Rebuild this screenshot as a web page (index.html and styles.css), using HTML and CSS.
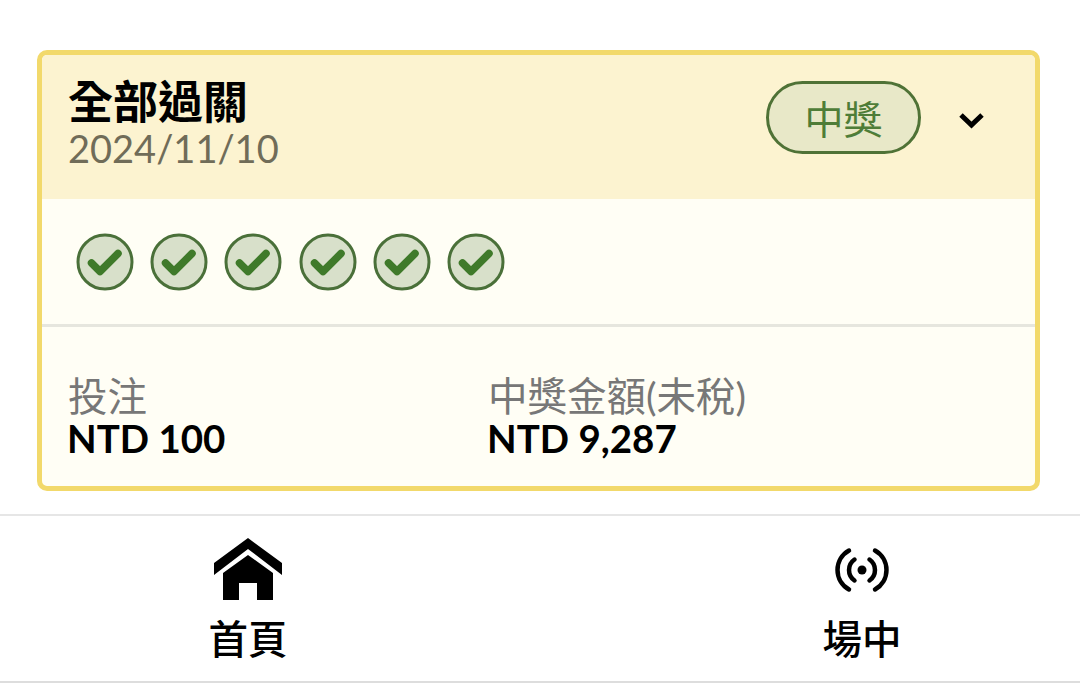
FILE: index.html
```html
<!DOCTYPE html>
<html lang="zh-Hant">
  <head>
    <meta charset="utf-8">
    <meta name="viewport" content="width=device-width,initial-scale=1.0">
    <title>全部過關</title>
    <link rel="stylesheet" href="styles.css">
  </head>
  <body>
    <main class="content">
      <section class="bet-card">
        <header class="bet-header">
          <div class="bet-title">
            <h1>全部過關</h1>
            <p>2024/11/10</p>
          </div>
          <span class="badge">中獎</span>
          <svg class="chevron" viewBox="0 0 28 18" width="28" height="18">
            <path d="M3 4L13.5 14L24 4" fill="none" stroke="#000" stroke-width="5"/>
          </svg>
        </header>
        <div class="legs">
          <svg class="leg" viewBox="0 0 58 58"><circle cx="29" cy="29" r="27" /><path d="M15.5 30L24 38.5L42 20.5" /></svg>
          <svg class="leg" viewBox="0 0 58 58"><circle cx="29" cy="29" r="27" /><path d="M15.5 30L24 38.5L42 20.5" /></svg>
          <svg class="leg" viewBox="0 0 58 58"><circle cx="29" cy="29" r="27" /><path d="M15.5 30L24 38.5L42 20.5" /></svg>
          <svg class="leg" viewBox="0 0 58 58"><circle cx="29" cy="29" r="27" /><path d="M15.5 30L24 38.5L42 20.5" /></svg>
          <svg class="leg" viewBox="0 0 58 58"><circle cx="29" cy="29" r="27" /><path d="M15.5 30L24 38.5L42 20.5" /></svg>
          <svg class="leg" viewBox="0 0 58 58"><circle cx="29" cy="29" r="27" /><path d="M15.5 30L24 38.5L42 20.5" /></svg>
        </div>
        <div class="amounts">
          <div class="amount">
            <span>投注</span>
            <strong>NTD 100</strong>
          </div>
          <div class="amount">
            <span>中獎金額(未稅)</span>
            <strong>NTD 9,287</strong>
          </div>
        </div>
      </section>
    </main>
    <nav class="tabs">
      <a class="tab">
        <svg viewBox="0 0 70 62" width="70" height="62">
          <path d="M35 0L69 25V37L35 11L1 37V25Z" />
          <path d="M35 17L60 35V62H44V45H26V62H10V35Z" />
        </svg>
        <span>首頁</span>
      </a>
      <a class="tab">
        <svg class="live" viewBox="0 0 70 62" width="70" height="62">
          <circle cx="35" cy="32" r="4.5" />
          <path d="M27.5 21.5a12.8 12.8 0 0 0 0 21M42.5 21.5a12.8 12.8 0 0 1 0 21M22 12.5a22.3 22.3 0 0 0 0 39M48 12.5a22.3 22.3 0 0 1 0 39" />
        </svg>
        <span>場中</span>
      </a>
    </nav>
  </body>
</html>
```

FILE: styles.css
```css
* { box-sizing: border-box; }

body {
  margin: 0;
  height: 684px;
  overflow: hidden;
  background: #fff;
  font-family: Lato, "Noto Sans CJK TC", sans-serif;
}

.content { padding: 50px 40px 23px 37px; }

.bet-card {
  height: 441px;
  border: 5px solid #f2d96b;
  border-radius: 10px;
  background: #fffef5;
  overflow: hidden;
}

.bet-header {
  display: flex;
  align-items: center;
  height: 144px;
  padding: 0 49px 0 26px;
  background: #fcf3d0;
}

.bet-title { flex: 1; margin-top: -6px; }
.bet-title h1 {
  margin: 0;
  font-size: 45px;
  line-height: 48px;
  font-weight: 700;
  color: #000;
}
.bet-title p {
  margin: 0;
  font-size: 38px;
  line-height: 44px;
  color: #706c58;
}

.badge {
  display: flex;
  align-items: center;
  justify-content: center;
  width: 155px;
  height: 73px;
  margin: -20px 37px 0 0;
  border: 3px solid #4f7236;
  border-radius: 37px;
  background: #e8e8c8;
  color: #4f7d38;
  font-size: 39px;
}

.chevron { margin-top: -15px; }

.legs {
  display: flex;
  gap: 16.2px;
  height: 128px;
  padding: 34px 0 0 34px;
  border-bottom: 3px solid #e6e6de;
}

.leg { width: 58px; height: 58px; }
.leg circle { fill: #d8e0ca; stroke: #4a7039; stroke-width: 3; }
.leg path { fill: none; stroke: #3f7a2a; stroke-width: 7.5; stroke-linecap: round; stroke-linejoin: round; }

.amounts {
  display: grid;
  grid-template-columns: 420px 1fr;
  padding: 46px 0 0 26px;
}

.amount span {
  display: block;
  font-size: 39.5px;
  line-height: 46px;
  color: #777;
}
.amount strong {
  display: block;
  margin-left: -1px;
  font-size: 38.5px;
  line-height: 38px;
  color: #000;
}

.tabs {
  display: grid;
  grid-template-columns: 1fr 1fr;
  height: 169px;
  border-top: 2px solid #e6e6e6;
  border-bottom: 2px solid #ddd;
}

.tab {
  display: flex;
  flex-direction: column;
  align-items: center;
  padding-top: 22px;
  font-weight: 500;
  font-size: 39.5px;
  line-height: 50px;
  color: #000;
}
.tab svg { margin-bottom: 14px; }
.tab:first-child { padding-right: 44px; }
.tab:last-child { padding-left: 104px; }

.tab .live { fill: #000; }
.tab .live path { fill: none; stroke: #000; stroke-width: 4.5; stroke-linecap: round; }
```
